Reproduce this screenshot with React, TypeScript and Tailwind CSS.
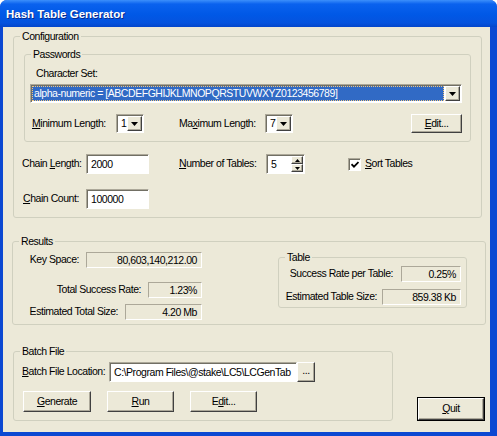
import { ReactNode } from "react";

const sunken =
  "border border-t-[#ACA899] border-l-[#ACA899] border-b-white border-r-white shadow-[inset_1px_1px_0_#716F64]";
const raised =
  "border border-t-white border-l-white border-b-[#404040] border-r-[#404040] shadow-[inset_-1px_-1px_0_#ACA899] bg-[#ECE9D8]";

function U({ children }: { children: ReactNode }) {
  return <span className="underline underline-offset-[1px]">{children}</span>;
}

function Arrow() {
  return (
    <div className={`${raised} w-[15px] h-full flex items-center justify-center shrink-0`}>
      <svg width="7" height="4" viewBox="0 0 7 4">
        <path d="M0 0h7L3.5 4z" fill="#000" />
      </svg>
    </div>
  );
}

function SmallCombo({ value }: { value: string }) {
  return (
    <div className={`${sunken} w-[28px] h-[19px] flex bg-white p-[1px]`}>
      <span className="flex-1 pl-[3px] leading-[15px]">{value}</span>
      <Arrow />
    </div>
  );
}

function Field({ w, children }: { w: string; children?: ReactNode }) {
  return (
    <div className={`${sunken} ${w} h-[20px] bg-white pl-[4px] pt-[2px] leading-[14px] whitespace-nowrap overflow-hidden`}>
      {children}
    </div>
  );
}

function ReadOnly({ w, value }: { w: string; value: string }) {
  return (
    <div className={`border border-t-[#ACA899] border-l-[#ACA899] border-b-white border-r-white ${w} h-[16px] text-right pr-[4px] leading-[14px]`}>
      {value}
    </div>
  );
}

function Button({ w, h, children }: { w: string; h: string; children: ReactNode }) {
  return (
    <div className={`${raised} ${w} ${h} flex items-center justify-center`}>{children}</div>
  );
}

function Group({ label, className, children }: { label: string; className: string; children: ReactNode }) {
  return (
    <fieldset className={`border border-[#D0D0BF] rounded-[3px] ${className}`}>
      <legend className="ml-[6px] px-[2px] leading-[12px]">{label}</legend>
      {children}
    </fieldset>
  );
}

export default function App() {
  return (
    <div className="w-[497px] h-[436px] flex flex-col bg-[#0B48D2] rounded-t-[7px] overflow-hidden font-['Liberation_Sans',Arial,sans-serif] text-[10.5px] tracking-[-0.45px] text-black">
      <div className="h-[27px] shrink-0 pl-[6px] pt-[3px] flex items-center bg-[linear-gradient(to_bottom,#3C8FFB_0%,#0A62EE_15%,#0058E6_55%,#0553DE_85%,#0346CB_100%)] text-white font-bold text-[11.5px] tracking-normal [text-shadow:1px_1px_0_#0A2A8A]">
        Hash Table Generator
      </div>
      <div className="flex-1 ml-[3px] mr-[7px] mb-[4px] bg-[#ECE9D8] flex flex-col">
        <Group label="Configuration" className="mt-[3px] ml-[10px] w-[469px] pb-[8px]">
          <Group label="Passwords" className="mt-[6px] ml-[10px] w-[447px] pb-[8px]">
            <div className="mt-[7px] pl-[11px] leading-[12px]">Character Set:</div>
            <div className={`${sunken} mt-[5px] ml-[5px] w-[432px] h-[19px] flex bg-white p-[1px]`}>
              <div className="flex-1 bg-[#316AC5] text-white leading-[15px] pl-[2px] mr-[1px] outline outline-dotted outline-[#F2C77E] -outline-offset-1">
                alpha-numeric = [ABCDEFGHIJKLMNOPQRSTUVWXYZ0123456789]
              </div>
              <Arrow />
            </div>
            <div className="mt-[11px] ml-[7px] flex items-center h-[19px]">
              <span className="w-[84px]"><U>M</U>inimum Length:</span>
              <SmallCombo value="1" />
              <span className="ml-[35px] w-[86px]">Ma<U>x</U>imum Length:</span>
              <SmallCombo value="7" />
              <div className="ml-[118px]">
                <Button w="w-[51px]" h="h-[19px]"><span><U>E</U>dit...</span></Button>
              </div>
            </div>
          </Group>
          <div className="mt-[12px] ml-[8px] flex items-center h-[20px]">
            <span className="w-[64px]">Chain <U>L</U>ength:</span>
            <Field w="w-[63px]">2000</Field>
            <span className="ml-[30px] w-[87px]"><U>N</U>umber of Tables:</span>
            <div className={`${sunken} w-[39px] h-[20px] bg-white flex p-[1px]`}>
              <span className="flex-1 pl-[3px] leading-[16px]">5</span>
              <div className="w-[12px] flex flex-col">
                <div className={`${raised} flex-1 flex items-center justify-center`}>
                  <svg width="5" height="3" viewBox="0 0 5 3"><path d="M2.5 0L5 3H0z" fill="#000" /></svg>
                </div>
                <div className={`${raised} flex-1 flex items-center justify-center`}>
                  <svg width="5" height="3" viewBox="0 0 5 3"><path d="M0 0h5L2.5 3z" fill="#000" /></svg>
                </div>
              </div>
            </div>
            <div className={`${sunken} ml-[43px] w-[13px] h-[13px] bg-white flex items-center justify-center`}>
              <svg width="8" height="7" viewBox="0 0 8 7">
                <path d="M0.5 3.2L3 5.7L7.5 1" stroke="#000" strokeWidth="1.8" fill="none" />
              </svg>
            </div>
            <span className="ml-[4px]"><U>S</U>ort Tables</span>
          </div>
          <div className="mt-[15px] ml-[9px] flex items-center h-[20px]">
            <span className="w-[63px]"><U>C</U>hain Count:</span>
            <Field w="w-[63px]">100000</Field>
          </div>
        </Group>

        <Group label="Results" className="mt-[17px] ml-[9px] w-[474px] pb-[4px]">
          <div className="flex">
            <div className="w-[189px] flex flex-col items-end">
              <div className="mt-[5px] flex items-center gap-[7px]">
                <span>Key Space:</span>
                <ReadOnly w="w-[116px]" value="80,603,140,212.00" />
              </div>
              <div className="mt-[14px] flex items-center gap-[7px]">
                <span>Total Success Rate:</span>
                <ReadOnly w="w-[54px]" value="1.23%" />
              </div>
              <div className="mt-[6px] flex items-center gap-[7px]">
                <span>Estimated Total Size:</span>
                <ReadOnly w="w-[77px]" value="4.20 Mb" />
              </div>
            </div>
            <Group label="Table" className="mt-[4px] ml-[76px] w-[189px] h-[57px] flex flex-col items-end pr-[5px]">
              <div className="mt-[3px] flex items-center gap-[8px]">
                <span>Success Rate per Table:</span>
                <ReadOnly w="w-[60px]" value="0.25%" />
              </div>
              <div className="mt-[7px] flex items-center gap-[5px]">
                <span>Estimated Table Size:</span>
                <ReadOnly w="w-[79px]" value="859.38 Kb" />
              </div>
            </Group>
          </div>
        </Group>

        <div className="flex items-end">
          <Group label="Batch File" className="mt-[20px] ml-[10px] w-[380px] pb-[8px]">
            <div className="mt-[5px] ml-[8px] flex items-center h-[20px]">
              <span className="w-[87px]"><U>B</U>atch File Location:</span>
              <Field w="w-[188px]">C:\Program Files\@stake\LC5\LCGenTab</Field>
              <Button w="w-[18px]" h="h-[20px]"><span className="-mt-[3px]">...</span></Button>
            </div>
            <div className="mt-[9px] ml-[9px] flex gap-[16px]">
              <Button w="w-[68px]" h="h-[21px]"><span><U>G</U>enerate</span></Button>
              <Button w="w-[67px]" h="h-[21px]"><span><U>R</U>un</span></Button>
              <Button w="w-[67px]" h="h-[21px]"><span>E<U>d</U>it...</span></Button>
            </div>
          </Group>
          <div className="ml-[24px] border border-black">
            <Button w="w-[66px]" h="h-[22px]"><span><U>Q</U>uit</span></Button>
          </div>
        </div>
      </div>
    </div>
  );
}
